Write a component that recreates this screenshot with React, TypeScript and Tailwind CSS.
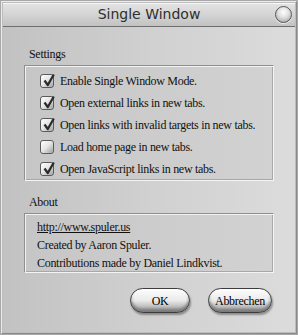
import React from 'react';

const serif = "font-['Liberation_Serif','Times_New_Roman',serif]";

function CheckBox({ checked }: { checked: boolean }) {
  return (
    <span className="relative flex h-[14px] w-[14px] shrink-0 items-center justify-center rounded-[3px] border border-[#5a5a5a] bg-gradient-to-br from-[#ffffff] via-[#e4e4e4] to-[#9c9c9c] shadow-[inset_0_0_1px_#fff]">
      {checked && (
        <svg viewBox="0 0 14 14" className="absolute left-[1px] top-[-2px] h-[14px] w-[14px]">
          <path d="M2.5 7.5 L5.8 12 L11.8 1.5" fill="none" stroke="#2a2a2a" strokeWidth="2.2" strokeLinejoin="round" />
        </svg>
      )}
    </span>
  );
}

function Panel({ children, className }: { children: React.ReactNode; className?: string }) {
  return (
    <div
      className={
        'mx-[21px] w-[250px] border border-t-[#8f8f8f] border-l-[#8f8f8f] border-r-[#f4f4f4] border-b-[#f4f4f4] bg-gradient-to-r from-[#c6c6c6] to-[#d2d2d2] shadow-[inset_1px_1px_0_#f2f2f2,inset_-1px_-1px_0_#a8a8a8] ' +
        (className ?? '')
      }
    >
      {children}
    </div>
  );
}

function PillButton({ label, width }: { label: string; width: string }) {
  return (
    <button
      className={`${width} ${serif} h-[25px] rounded-full border border-[#3c3c3c] bg-gradient-to-b from-[#fdfdfd] via-[#eaeaea] to-[#9a9a9a] text-[12px] tracking-[-0.3px] leading-none text-black shadow-[inset_0_1px_1px_#fff,inset_0_-3px_3px_#7a7a7a,1px_2px_2px_rgba(0,0,0,0.35)]`}
    >
      {label}
    </button>
  );
}

const settings = [
  { label: 'Enable Single Window Mode.', checked: true },
  { label: 'Open external links in new tabs.', checked: true },
  { label: 'Open links with invalid targets in new tabs.', checked: true },
  { label: 'Load home page in new tabs.', checked: false },
  { label: 'Open JavaScript links in new tabs.', checked: true },
];

export default function App() {
  return (
    <div className="h-[335px] w-[298px] bg-[#a8a8a8] p-[1px]">
      <div className="flex h-[333px] w-[296px] flex-col border border-[#ececec] border-r-[#8a8a8a] border-b-[#8a8a8a] bg-[#bdbdbd] p-[1px]">
        {/* title bar */}
        <div className="flex h-[24px] shrink-0 items-center border-b border-[#6e6e6e] bg-gradient-to-b from-[#e4e4e4] via-[#d4d4d4] to-[#c2c2c2] shadow-[inset_0_1px_0_#f6f6f6]">
          <div className="flex-1 pl-[20px] text-center font-['DejaVu_Sans','Verdana',sans-serif] text-[14px] text-[#2e2e2e]">
            Single Window
          </div>
          <span className="mr-[3px] h-[17px] w-[17px] rounded-full border border-[#555] bg-[radial-gradient(circle_at_50%_35%,#ffffff_0%,#e2e2e2_40%,#9a9a9a_100%)] shadow-[0_1px_1px_rgba(255,255,255,0.8)]" />
        </div>

        {/* body */}
        <div className={`flex flex-1 flex-col bg-gradient-to-r from-[#c2c2c2] via-[#d0d0d0] to-[#dcdcdc] pt-[20px] ${serif} whitespace-nowrap text-[12px] tracking-[-0.3px] text-[#111]`}>
          <div className="ml-[26px] h-[14px] leading-[14px]">Settings</div>
          <div className="h-[4px]" />
          <Panel className="pt-[4px]">
            {settings.map((s) => (
              <div key={s.label} className="flex h-[22px] items-center gap-[6px] pl-[15px]">
                <CheckBox checked={s.checked} />
                <span>{s.label}</span>
              </div>
            ))}
          </Panel>

          <div className="ml-[26px] mt-[14px] h-[14px] leading-[14px]">About</div>
          <div className="h-[4px]" />
          <Panel className="pl-[12px] pt-[4px]">
            <div className="flex h-[18px] items-center underline">http://www.spuler.us</div>
            <div className="flex h-[18px] items-center">Created by Aaron Spuler.</div>
            <div className="flex h-[18px] items-center">Contributions made by Daniel Lindkvist.</div>
          </Panel>

          <div className="mr-[23px] mt-[15px] flex justify-end gap-[18px]">
            <PillButton label="OK" width="w-[60px]" />
            <PillButton label="Abbrechen" width="w-[64px]" />
          </div>
        </div>
      </div>
    </div>
  );
}
